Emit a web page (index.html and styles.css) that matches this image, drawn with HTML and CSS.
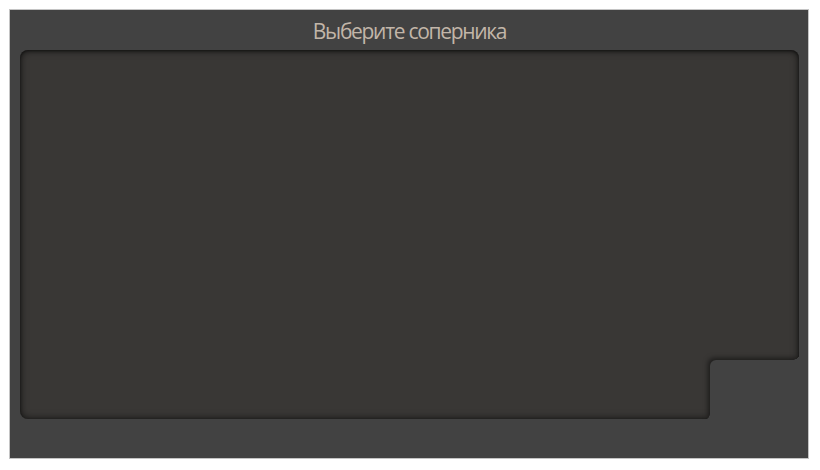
FILE: index.html
```html
<!DOCTYPE html>
<html lang="ru">
<head>
<meta charset="utf-8">
<link rel="stylesheet" href="styles.css">
</head>
<body>
<div class="panel">
  <div class="title">Выберите соперника</div>
  <div class="well">
    <div class="well-body"></div>
    <div class="well-foot">
      <div class="notch"></div>
    </div>
  </div>
</div>
</body>
</html>
```
FILE: styles.css
```css
html, body { margin: 0; padding: 0; background: #ffffff; }
body { padding: 9px; }
.panel {
  box-sizing: border-box;
  width: 800px;
  height: 450px;
  border: 1px solid #c4c4c4;
  background: #424242;
  display: flex;
  flex-direction: column;
  padding: 0 9px 0 10px;
}
.title {
  height: 40px;
  display: flex;
  align-items: center;
  justify-content: center;
  font-family: "Open Sans", "Noto Sans", sans-serif;
  font-size: 21px;
  font-weight: 400;
  letter-spacing: -1.3px;
  color: #c2b6a9;
  padding-top: 1px;
  box-sizing: border-box;
}
.well {
  height: 369px;
  background: #393735;
  border-radius: 8px;
  box-shadow: inset 0 0 7px 1px rgba(0,0,0,0.55), inset 0 1px 3px rgba(0,0,0,0.5);
  display: flex;
  flex-direction: column;
}
.well-body { flex: 1; }
.well-foot {
  height: 59px;
  display: flex;
  justify-content: flex-end;
}
.notch {
  position: relative;
  width: 90px;
  margin-right: -1px;
  margin-bottom: -1px;
  background: #424242;
  border-top-left-radius: 6px;
  box-shadow: -2px -2px 5px rgba(0,0,0,0.5);
  clip-path: inset(-10px 0 0 -10px);
}
.notch::before {
  content: "";
  position: absolute;
  left: -6px;
  bottom: 0;
  width: 6px;
  height: 6px;
  background: radial-gradient(circle at 0 0, transparent 5.5px, #424242 6px);
}
.notch::after {
  content: "";
  position: absolute;
  right: 0;
  top: -7px;
  width: 7px;
  height: 7px;
  background: radial-gradient(circle at 0 0, transparent 6.5px, #424242 7px);
}
```
